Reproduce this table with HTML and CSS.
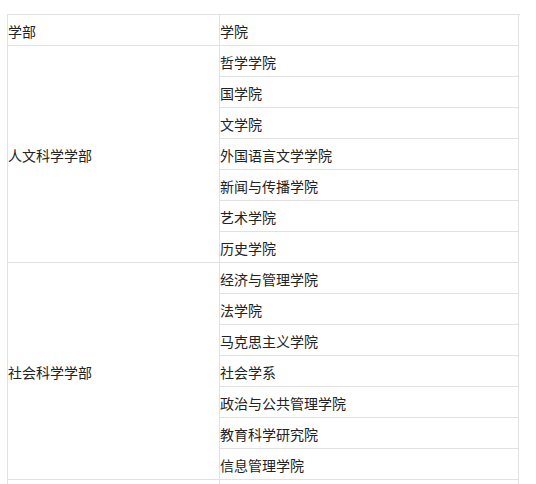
FILE: index.html
```html
<!DOCTYPE html>
<html lang="zh">
<head>
<meta charset="utf-8">
<link rel="stylesheet" href="styles.css">
</head>
<body>
<div class="table">
  <div class="cell">学部</div>
  <div class="cell">学院</div>
  <div class="cell group g7">人文科学学部</div>
  <div class="cell">哲学学院</div>
  <div class="cell">国学院</div>
  <div class="cell">文学院</div>
  <div class="cell">外国语言文学学院</div>
  <div class="cell">新闻与传播学院</div>
  <div class="cell">艺术学院</div>
  <div class="cell">历史学院</div>
  <div class="cell group g7">社会科学学部</div>
  <div class="cell">经济与管理学院</div>
  <div class="cell">法学院</div>
  <div class="cell">马克思主义学院</div>
  <div class="cell">社会学系</div>
  <div class="cell">政治与公共管理学院</div>
  <div class="cell">教育科学研究院</div>
  <div class="cell">信息管理学院</div>
  <div class="cell tail"></div>
  <div class="cell tail"></div>
</div>
</body>
</html>
```
FILE: styles.css
```css
html, body {
  margin: 0;
  padding: 0;
  background: #ffffff;
}
body {
  padding: 14px 0 0 7px;
  font-family: "Noto Sans CJK SC", "Microsoft YaHei", sans-serif;
  font-size: 14px;
  color: #222222;
}
.table {
  display: grid;
  grid-template-columns: 212px 299px;
  grid-template-rows: repeat(15, 31px) 4px;
  width: 512px;
  border-top: 1px solid #e1e1e1;
  border-left: 1px solid #e1e1e1;
}
.cell {
  box-sizing: border-box;
  border-right: 1px solid #e1e1e1;
  border-bottom: 1px solid #e1e1e1;
  display: flex;
  align-items: center;
  padding: 1px 0 0 0;
  line-height: 20px;
  white-space: nowrap;
}
.g7 {
  grid-row: span 7;
}
.tail {
  border-bottom: none;
}
```
